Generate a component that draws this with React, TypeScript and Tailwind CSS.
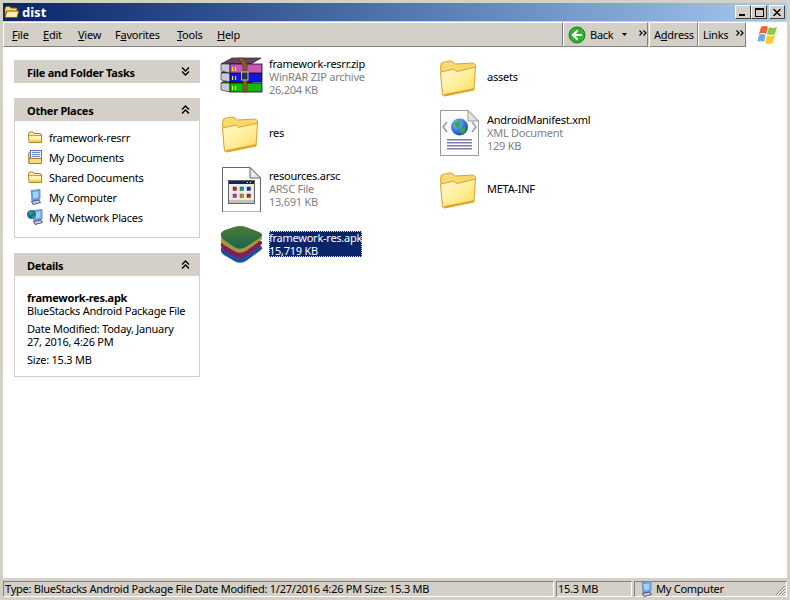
import type { ReactNode } from 'react';

function LargeFolder() {
  return (
    <svg width="48" height="48" viewBox="0 0 48 48" className="shrink-0">
      <defs>
        <linearGradient id="fold-front" x1="0" y1="0" x2="1" y2="1">
          <stop offset="0" stopColor="#fffad0" />
          <stop offset="0.6" stopColor="#ffec90" />
          <stop offset="1" stopColor="#fbd860" />
        </linearGradient>
      </defs>
      <g transform="translate(0.5 0)">
        <path d="M3 15 L4 11 L8 9.5 L14 9 L18 12 L36 11 L38 13 L37 22 L5 40 Z" fill="#f8d870" stroke="#d6a62c" strokeWidth="1" />
        <path d="M3 20 L17 17 L19 19.5 L38 15 L36.5 38 L7 44 L5 43 Z" fill="url(#fold-front)" stroke="#d8a52a" strokeWidth="1" />
        <path d="M7 44 L36.5 38 L36.8 36 L6.5 42 Z" fill="#e0a830" />
      </g>
    </svg>
  );
}

function RarIcon() {
  const book = (y: number, top: string, front: string) => (
    <g key={y}>
      <path d={`M2 ${y + 6} L13 ${y} L42 ${y} L32 ${y + 6} Z`} fill={top} stroke="#222" strokeWidth="0.7" />
      <path d={`M2 ${y + 6} L11 ${y + 6} L11 ${y + 15} L2 ${y + 13} Z`} fill="#c8c8d8" stroke="#333" strokeWidth="0.7" />
      <rect x="11" y={y + 6} width="32" height="9" fill={front} stroke="#111" strokeWidth="0.8" />
      <rect x="13" y={y + 9} width="1.2" height="4" fill="#f2e030" />
      <rect x="16" y={y + 9} width="1.2" height="4" fill="#f2e030" />
    </g>
  );
  return (
    <svg width="48" height="48" viewBox="0 0 48 48" className="shrink-0">
      {book(25, '#0c7a1a', '#10b810')}
      {book(15, '#1a1a80', '#1414e0')}
      {book(6, '#6b3f60', '#c858b8')}
      <path d="M19 6 L24 6 L28 12 L28 40 L24 40 L24 14 Z" fill="#8a5a26" stroke="#4e3010" strokeWidth="0.6" />
      <rect x="22.5" y="20" width="6.5" height="8" fill="#333" stroke="#ddd" strokeWidth="0.8" />
    </svg>
  );
}

function AppDocIcon() {
  const dots = ['#e02020', '#10a0a0', '#2030c0', '#e020e0', '#c0a000', '#d02020'];
  return (
    <svg width="48" height="48" viewBox="0 0 48 48" className="shrink-0">
      <path d="M3.5 3.5 H31 L41.5 14 V48 H3.5 Z" fill="#fff" stroke="#666" strokeWidth="1" />
      <path d="M31 3.5 V14 H41.5 Z" fill="#e8e8e8" stroke="#666" strokeWidth="1" />
      <rect x="9.5" y="16.5" width="26" height="23" fill="#ecece4" stroke="#444" strokeWidth="0.8" />
      <rect x="10" y="17" width="25" height="3" fill="#0a246a" />
      <rect x="28" y="18" width="1" height="1" fill="#fff" />
      <rect x="31" y="18" width="1" height="1" fill="#fff" />
      <rect x="10" y="36" width="25" height="3" fill="#c4c0b4" />
      {dots.map((color, i) => (
        <rect key={i} x={14 + (i % 3) * 7} y={i < 3 ? 23 : 30} width="3.5" height="3.5" fill={color} stroke="#222" strokeWidth="0.4" />
      ))}
    </svg>
  );
}

function XmlDocIcon() {
  return (
    <svg width="48" height="48" viewBox="0 0 48 48" className="shrink-0">
      <defs>
        <radialGradient id="xml-globe" cx="0.35" cy="0.3" r="0.8">
          <stop offset="0" stopColor="#7ac0ff" />
          <stop offset="1" stopColor="#0a3ea8" />
        </radialGradient>
      </defs>
      <g transform="translate(1 0)">
        <path d="M2.5 2.5 H30 L40.5 13 V47.5 H2.5 Z" fill="#fbfbfd" stroke="#9a9a9a" strokeWidth="1" />
        <path d="M30 2.5 V13 H40.5 Z" fill="#e4e4e8" stroke="#9a9a9a" strokeWidth="1" />
        <path d="M9 14 L5 19 L9 24 M34 14 L38 19 L34 24" fill="none" stroke="#9a9ab0" strokeWidth="1.5" />
        <circle cx="21.5" cy="19" r="8.5" fill="url(#xml-globe)" />
        <path d="M16 15 L21 13 L23 17 L19 20 Z M22 22 L27 19 L27 24 L23 26 Z" fill="#3aa83a" />
        {[31, 34, 37, 40].map((y) => (
          <rect key={y} x="9" y={y} width="25" height="1.5" fill="#7c7ca8" />
        ))}
      </g>
    </svg>
  );
}

function BlueStacksIcon() {
  return (
    <svg width="48" height="48" viewBox="0 0 48 48" className="shrink-0">
      <defs>
        <linearGradient id="bs-top" x1="0" y1="0" x2="0" y2="1">
          <stop offset="0" stopColor="#4a7c3a" />
          <stop offset="0.7" stopColor="#2a6a44" />
          <stop offset="1" stopColor="#1a6060" />
        </linearGradient>
      </defs>
      <path d="M2 31 Q1 27 6 25 L17 20 Q22 18 27 20 L40 25 Q45 27 42 30 L27 41 Q22 44 17 42 L5 35 Q2 33 2 31 Z" fill="#1c4f9c" />
      <path d="M2 26 Q1 22 6 20 L17 15 Q22 13 27 15 L40 20 Q45 22 42 25 L27 36 Q22 39 17 37 L5 30 Q2 28 2 26 Z" fill="#8c1c50" />
      <path d="M2 21 Q1 17 6 15 L17 10 Q22 8 27 10 L40 15 Q45 17 42 20 L27 31 Q22 34 17 32 L5 25 Q2 23 2 21 Z" fill="#a09a3c" />
      <path d="M2 16 Q1 12 6 10 L15 7 Q22 5 27 7 L40 12 Q45 14 42 17 L27 27 Q22 30 17 28 L5 20 Q2 18 2 16 Z" fill="url(#bs-top)" />
    </svg>
  );
}

function SmallFolder() {
  return (
    <svg width="16" height="16" viewBox="0 0 16 16" className="shrink-0">
      <path d="M1.5 5 L2.5 3 H6 L7 4.5 H13.5 L14.5 6 V13.5 H2 Z" fill="#ffeea8" stroke="#a88428" strokeWidth="1" />
      <path d="M2 6.5 H14" stroke="#c8a040" strokeWidth="1" />
      <path d="M2.5 7.5 H14 V9 H2.5 Z" fill="#fff8d0" />
      <rect x="2.5" y="11" width="11.5" height="2" fill="#f8cf60" />
    </svg>
  );
}

function SmallDocs() {
  return (
    <svg width="16" height="16" viewBox="0 0 16 16" className="shrink-0">
      <path d="M1.5 4.5 L2.5 3 H5 V14.5 H2 Z" fill="#f8d878" stroke="#a88428" strokeWidth="1" />
      <rect x="3.5" y="1.5" width="11" height="9" fill="#e4eefc" stroke="#5a78b0" strokeWidth="1" />
      <path d="M5 3.5 H13 M5 5.5 H13 M5 7.5 H13" stroke="#6a8cc8" strokeWidth="1" />
      <path d="M2 9.5 H14.5 V14.5 H2 Z" fill="#f8dc80" stroke="#a88428" strokeWidth="1" />
    </svg>
  );
}

function SmallComputer() {
  return (
    <svg width="16" height="16" viewBox="0 0 16 16" className="shrink-0">
      <path d="M4 1.5 L13 0.5 V10 L5 12 Z" fill="#5a9cf0" stroke="#7c96c4" strokeWidth="1" />
      <path d="M5.5 3 L11.5 2.2 V8.5 L6.5 9.8 Z" fill="#a4d0ff" />
      <path d="M4.5 12.5 L12 11 L13.5 13.5 L6 15.5 Z" fill="#c8cfe0" stroke="#3c4862" strokeWidth="0.9" />
    </svg>
  );
}

function SmallNetwork() {
  return (
    <svg width="17" height="16" viewBox="0 0 17 16" className="mr-[-1px] shrink-0">
      <path d="M6 1.5 L15 0.5 V10 L7 12 Z" fill="#5a9cf0" stroke="#7c96c4" strokeWidth="1" />
      <path d="M8 3 L13.5 2.2 V8.5 L8.5 9.8 Z" fill="#a4d0ff" />
      <path d="M6.5 12.5 L14 11 L15.5 13.5 L8 15.5 Z" fill="#c8cfe0" stroke="#3c4862" strokeWidth="0.9" />
      <circle cx="4.5" cy="5.5" r="4.5" fill="#1f62c4" />
      <path d="M1 3.5 L4.5 1.5 L6.5 4 L3.5 6.5 Z M4.5 8 L7.5 6 L8 8 L6 9.5 Z" fill="#2fa83a" />
    </svg>
  );
}

function Chevrons({ up = false }: { up?: boolean }) {
  return (
    <svg width="9" height="9" viewBox="0 0 9 9" className="shrink-0">
      <path
        d={up ? 'M1 4.5 L4.5 1 L8 4.5 M1 8.5 L4.5 5 L8 8.5' : 'M1 0.5 L4.5 4 L8 0.5 M1 4.5 L4.5 8 L8 4.5'}
        fill="none"
        stroke="#000"
        strokeWidth="1.4"
      />
    </svg>
  );
}

function MoreArrows({ className }: { className: string }) {
  return (
    <svg width="8" height="6" viewBox="0 0 8 6" className={`shrink-0 ${className}`}>
      <path d="M0.5 0.5 L3 3 L0.5 5.5 M4.5 0.5 L7 3 L4.5 5.5" fill="none" stroke="#000" strokeWidth="1.2" />
    </svg>
  );
}

function TaskPanel({ title, up = true, children }: { title: string; up?: boolean; children?: ReactNode }) {
  return (
    <section>
      <div className="flex h-[23px] items-center justify-between bg-[#d4d0c8] pl-[13px] pr-[10px]">
        <span className="pt-[2px] font-bold">{title}</span>
        <Chevrons up={up} />
      </div>
      {children && <div className="border border-t-0 border-[#d4d0c8] bg-white">{children}</div>}
    </section>
  );
}

function PlaceRow({ icon, label }: { icon: ReactNode; label: string }) {
  return (
    <div className="flex h-[20px] items-center gap-[6px] pl-[12px]">
      {icon}
      <span>{label}</span>
    </div>
  );
}

function Tile({ icon, lines, selected = false }: { icon: ReactNode; lines: string[]; selected?: boolean }) {
  return (
    <div className="flex h-[56px] items-center gap-[2px]">
      {icon}
      {selected ? (
        <div className="bg-[#0a246a] leading-[13px] text-white outline-1 outline-dotted outline-offset-[-1px] outline-[#d4d0c8]">
          {lines.map((line) => (
            <div key={line}>{line}</div>
          ))}
        </div>
      ) : (
        <div className="leading-[13px]">
          {lines.map((line, i) => (
            <div key={line} className={i === 0 ? 'text-black' : 'text-[#808080]'}>
              {line}
            </div>
          ))}
        </div>
      )}
    </div>
  );
}

function WinButton({ children }: { children: ReactNode }) {
  return (
    <div className="flex h-[14px] w-[16px] items-center justify-center border border-t-white border-l-white border-r-[#404040] border-b-[#404040] bg-[#d4d0c8]">
      {children}
    </div>
  );
}

function ToolBand({ className, children }: { className: string; children: ReactNode }) {
  return (
    <div className={`flex items-center border border-t-white border-l-white border-r-[#808080] border-b-[#808080] ${className}`}>
      {children}
    </div>
  );
}

export default function App() {
  return (
    <div className="flex h-[600px] w-[790px] flex-col overflow-hidden bg-[#d4d0c8] p-[3px] font-['Noto_Sans',sans-serif] text-[11px] leading-[13px] tracking-[-0.25px] text-black">
      <div className="flex h-[18px] shrink-0 items-center bg-gradient-to-r from-[#0a246a] to-[#a6caf0] pr-[2px]">
        <svg width="16" height="16" viewBox="0 0 16 16" className="ml-[1px] shrink-0">
          <path d="M1 4 L2 2.5 H6 L7 4 H13 V13.5 H1 Z" fill="#f8d878" stroke="#7a5a10" />
          <path d="M3 7 H15 L13 13.5 H1 Z" fill="#ffeeaa" stroke="#7a5a10" />
        </svg>
        <span className="ml-[2px] text-[13px] font-bold tracking-normal text-white">dist</span>
        <div className="ml-auto flex">
          <WinButton>
            <span className="mt-[6px] mr-[2px] block h-[2px] w-[6px] bg-black" />
          </WinButton>
          <WinButton>
            <span className="block h-[9px] w-[9px] border border-t-2 border-black" />
          </WinButton>
          <div className="ml-[2px]">
            <WinButton>
              <svg width="8" height="7" viewBox="0 0 8 7">
                <path d="M0.5 0 L7.5 7 M7.5 0 L0.5 7" stroke="#000" strokeWidth="1.4" />
              </svg>
            </WinButton>
          </div>
        </div>
      </div>

      <div className="mt-[1px] flex h-[25px] shrink-0">
        <ToolBand className="w-[560px] pl-[8px]">
          {[
            ['F', 'ile', 'w-[31px]', ''],
            ['E', 'dit', 'w-[35px]', ''],
            ['V', 'iew', 'w-[37px]', ''],
            ['Fa', 'vorites', 'w-[62px]', 'a'],
            ['T', 'ools', 'w-[40px]', ''],
            ['H', 'elp', 'w-[30px]', ''],
          ].map(([head, rest, width, mark]) => (
            <span key={head} className={`${width} shrink-0`}>
              {mark ? (
                <>
                  F<u>a</u>
                </>
              ) : (
                <u>{head}</u>
              )}
              {rest}
            </span>
          ))}
        </ToolBand>
        <ToolBand className="w-[85px] pl-[4px]">
          <svg width="18" height="18" viewBox="0 0 18 18" className="shrink-0">
            <circle cx="9" cy="9" r="8" fill="#35b030" stroke="#1e8020" />
            <path d="M9.5 4.5 L5 9 L9.5 13.5 M5.5 9 H14" fill="none" stroke="#fff" strokeWidth="2.2" />
          </svg>
          <span className="ml-[4px]">Back</span>
          <svg width="5" height="3" viewBox="0 0 5 3" className="ml-[9px] shrink-0">
            <path d="M0 0 H5 L2.5 3 Z" fill="#000" />
          </svg>
          <MoreArrows className="mb-[4px] ml-[12px]" />
        </ToolBand>
        <ToolBand className="ml-[1px] w-[49px] pl-[4px]">
          <span>
            A<u>d</u>dress
          </span>
        </ToolBand>
        <ToolBand className="w-[48px] pl-[4px]">
          <span>Links</span>
          <MoreArrows className="mb-[4px] ml-[8px]" />
        </ToolBand>
        <div className="flex flex-1 items-center justify-center bg-white pl-[3px]">
          <svg width="22" height="20" viewBox="0 0 22 20">
            <path d="M4 2 Q8 0 11 2 L9 9 Q6 7 2 9 Z" fill="#f0643c" />
            <path d="M12 2 Q16 4 20 2 L18 9 Q14 11 10 9 Z" fill="#8cc850" />
            <path d="M2 10 Q5 8 8.5 10 L7 17 Q4 15 0.5 17 Z" fill="#6aa8e8" />
            <path d="M10 10 Q14 12 18 10 L16 18 Q12 20 8 18 Z" fill="#f8c838" />
          </svg>
        </div>
      </div>

      <main className="flex min-h-0 flex-1 bg-white">
        <aside className="w-[216px] shrink-0 pt-[13px] pl-[11px]">
          <div className="flex w-[186px] flex-col gap-[15px]">
            <TaskPanel title="File and Folder Tasks" up={false} />
            <TaskPanel title="Other Places">
              <div className="pt-[6px] pb-[10px]">
                <PlaceRow icon={<SmallFolder />} label="framework-resrr" />
                <PlaceRow icon={<SmallDocs />} label="My Documents" />
                <PlaceRow icon={<SmallFolder />} label="Shared Documents" />
                <PlaceRow icon={<SmallComputer />} label="My Computer" />
                <PlaceRow icon={<SmallNetwork />} label="My Network Places" />
              </div>
            </TaskPanel>
            <TaskPanel title="Details">
              <div className="flex h-[100px] flex-col pt-[15px] pl-[12px] whitespace-nowrap">
                <div className="font-bold">framework-res.apk</div>
                <div>BlueStacks Android Package File</div>
                <div className="mt-[5px]">Date Modified: Today, January</div>
                <div>27, 2016, 4:26 PM</div>
                <div className="mt-[5px]">Size: 15.3 MB</div>
              </div>
            </TaskPanel>
          </div>
        </aside>
        <div className="grid flex-1 auto-rows-[56px] grid-cols-[218px_219px] content-start pt-[1px]">
          <Tile icon={<RarIcon />} lines={['framework-resrr.zip', 'WinRAR ZIP archive', '26,204 KB']} />
          <Tile icon={<LargeFolder />} lines={['assets']} />
          <Tile icon={<LargeFolder />} lines={['res']} />
          <Tile icon={<XmlDocIcon />} lines={['AndroidManifest.xml', 'XML Document', '129 KB']} />
          <Tile icon={<AppDocIcon />} lines={['resources.arsc', 'ARSC File', '13,691 KB']} />
          <Tile icon={<LargeFolder />} lines={['META-INF']} />
          <Tile icon={<BlueStacksIcon />} lines={['framework-res.apk', '15,719 KB']} selected />
        </div>
      </main>

      <footer className="flex h-[19px] shrink-0 items-end gap-[2px]">
        <div className="flex h-[16px] w-[551px] items-center overflow-hidden border border-t-[#808080] border-l-[#808080] border-r-white border-b-white pb-[2px] pl-[1px] whitespace-nowrap">
          Type: BlueStacks Android Package File Date Modified: 1/27/2016 4:26 PM Size: 15.3 MB
        </div>
        <div className="flex h-[16px] w-[76px] items-center border border-t-[#808080] border-l-[#808080] border-r-white border-b-white pb-[2px] pl-[1px]">
          15.3 MB
        </div>
        <div className="relative flex h-[16px] flex-1 items-center gap-[2px] border border-t-[#808080] border-l-[#808080] border-r-white border-b-white pl-[3px]">
          <SmallComputer />
          <span className="pb-[2px]">My Computer</span>
          <svg width="12" height="12" viewBox="0 0 12 12" className="absolute right-0 bottom-0">
            <path d="M11 2 L2 11 M11 5 L5 11 M11 8 L8 11" stroke="#808080" strokeWidth="1" />
            <path d="M11 3 L3 11 M11 6 L6 11 M11 9 L9 11" stroke="#fff" strokeWidth="1" />
          </svg>
        </div>
      </footer>
    </div>
  );
}
